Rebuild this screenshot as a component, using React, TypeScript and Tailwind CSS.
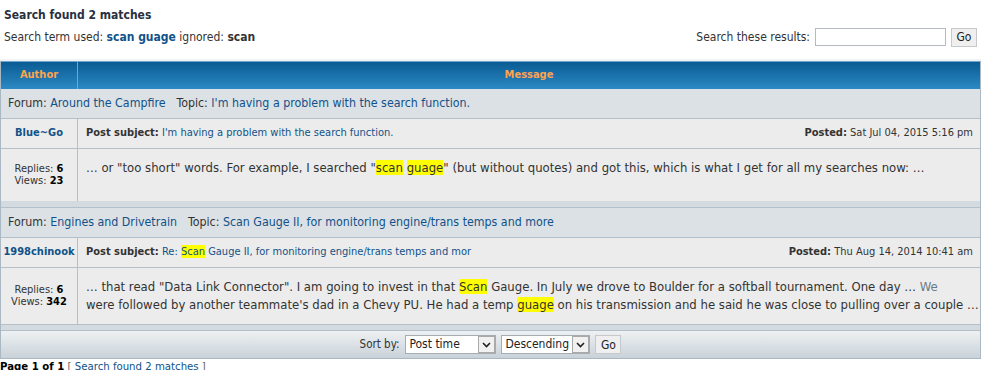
import React from "react";

const font = "font-['DejaVu_Sans_Condensed','DejaVu_Sans',sans-serif]";

function Hl({ children }: { children: React.ReactNode }) {
  return <span className="bg-[#ffff00]">{children}</span>;
}

function Chevron() {
  return (
    <svg width="9" height="6" viewBox="0 0 9 6" className="block">
      <path d="M1 1 L4.5 4.5 L8 1" fill="none" stroke="#222" strokeWidth="1.6" />
    </svg>
  );
}

function FakeSelect({ label, width }: { label: string; width: string }) {
  return (
    <div className={`flex h-[19px] items-stretch border border-[#a5acb2] bg-white ${width}`}>
      <div className="flex-1 pl-[3px] text-[12px] leading-[17px] text-[#222]">{label}</div>
      <div className="flex w-[17px] items-center justify-center border border-[#a9a9a9] bg-[#f1f1f1]">
        <Chevron />
      </div>
    </div>
  );
}

function Button({ label }: { label: string }) {
  return (
    <div className="flex h-[19px] w-[26px] items-center justify-center border border-[#c5c9cc] bg-[#efefef] text-[12px] text-[#222]">
      {label}
    </div>
  );
}

interface Result {
  forum: string;
  topic: string;
  author: string;
  subject: React.ReactNode;
  posted: string;
  replies: number;
  views: number;
  body: React.ReactNode;
  bodyH: string;
}

const results: Result[] = [
  {
    forum: "Around the Campfire",
    topic: "I'm having a problem with the search function.",
    author: "Blue~Go",
    subject: "I'm having a problem with the search function.",
    posted: "Sat Jul 04, 2015 5:16 pm",
    replies: 6,
    views: 23,
    body: (
      <>
        … or "too short" words. For example, I searched "<Hl>scan</Hl> <Hl>guage</Hl>" (but without quotes) and got this, which is what I get for all my searches now: …
      </>
    ),
    bodyH: "h-[52px]",
  },
  {
    forum: "Engines and Drivetrain",
    topic: "Scan Gauge II, for monitoring engine/trans temps and more",
    author: "1998chinook",
    subject: (
      <>
        Re: <Hl>Scan</Hl> Gauge II, for monitoring engine/trans temps and mor
      </>
    ),
    posted: "Thu Aug 14, 2014 10:41 am",
    replies: 6,
    views: 342,
    body: (
      <>
        … that read "Data Link Connector". I am going to invest in that <Hl>Scan</Hl> Gauge. In July we drove to Boulder for a softball tournament. One day … <span className="text-[#6a7a88]">We</span>
        <br />
        were followed by another teammate's dad in a Chevy PU. He had a temp <Hl>guage</Hl> on his transmission and he said he was close to pulling over a couple …
      </>
    ),
    bodyH: "h-[56px]",
  },
];

export default function App() {
  return (
    <div className={`h-[370px] w-[984px] overflow-hidden bg-white text-[#333] ${font}`}>
      <div className="px-[4px] pt-[7px]">
        <h2 className="text-[12px] font-bold leading-[16px] text-[#28313f]">Search found 2 matches</h2>
        <div className="mt-[4px] flex items-center justify-between pr-[3px]">
          <p className="text-[12px] leading-[20px]">
            Search term used: <span className="font-bold text-[#105289]">scan guage</span> ignored:{" "}
            <span className="font-bold">scan</span>
          </p>
          <div className="flex items-center gap-[5px] text-[12px]">
            <span>Search these results:</span>
            <div className="h-[18px] w-[131px] border border-[#b4bac0] bg-white" />
            <Button label="Go" />
          </div>
        </div>
      </div>

      <div className="mt-[12px] h-[2px] w-[981px] bg-[#eef3f6]" />
      <div className="grid w-[981px] grid-cols-[77px_1fr] border-x border-b border-[#a9b8c2]">
        <div className="flex h-[28px] items-center justify-center border-t border-r border-[#72a6cc] bg-gradient-to-b from-[#0a5b93] to-[#2b8ac4] text-[11px] font-bold text-[#ffa34f]">
          Author
        </div>
        <div className="flex h-[28px] items-center justify-center border-t border-[#72a6cc] bg-gradient-to-b from-[#0a5b93] to-[#2b8ac4] text-[11px] font-bold text-[#ffa34f]">
          Message
        </div>

        {results.map((r, i) => (
          <React.Fragment key={i}>
            {i > 0 && (
              <div className="col-span-2 h-[7px] border-b border-[#b4c0c9] bg-[#d3dbe1]" />
            )}
            <div className="col-span-2 flex h-[30px] items-center border-b border-[#b4c0c9] bg-[#dce1e5] px-[7px] text-[12.3px]">
              <span>
                Forum: <span className="text-[#105289]">{r.forum}</span>
              </span>
              <span className="ml-[11px]">
                Topic: <span className="text-[#105289]">{r.topic}</span>
              </span>
            </div>
            <div className="flex h-[30px] items-center justify-center border-r border-b border-[#b4c0c9] bg-[#ececec] text-[11px] font-bold text-[#105289]">
              {r.author}
            </div>
            <div className="flex h-[30px] items-center justify-between border-b border-[#b4c0c9] bg-[#ececec] pl-[8px] pr-[7px] text-[11px]">
              <span>
                <span className="font-bold">Post subject:</span>{" "}
                <span className="text-[#105289]">{r.subject}</span>
              </span>
              <span>
                <span className="font-bold">Posted:</span> {r.posted}
              </span>
            </div>
            <div className={`flex ${r.bodyH} flex-col items-center justify-center border-r border-[#b4c0c9] bg-[#ececec] text-[11px] leading-[12px] text-[#333]`}>
              <span>
                Replies: <b className="text-black">{r.replies}</b>
              </span>
              <span>
                Views: <b className="text-black">{r.views}</b>
              </span>
            </div>
            <div className={`${r.bodyH} bg-[#ececec] pl-[8px] pt-[10px] text-[13px] leading-[18px] text-[#333]`}>
              {r.body}
            </div>
          </React.Fragment>
        ))}

        <div className="col-span-2 h-[7px] border-y border-[#b4c0c9] bg-[#d3dbe1]" />
        <div className="col-span-2 flex h-[27px] items-center justify-center gap-[5px] bg-gradient-to-b from-[#eef1f3] to-[#c9d2d9] text-[11.5px]">
          <span className="mr-[1px]">Sort by:</span>
          <FakeSelect label="Post time" width="w-[91px]" />
          <FakeSelect label="Descending" width="w-[89px]" />
          <Button label="Go" />
        </div>
      </div>

      <div className="pt-[1px] text-[11.3px] leading-[14px]">
        <b className="text-black">Page 1 of 1</b>{" "}
        <span className="text-[#666]">
          [ <span className="text-[#105289]">Search found 2 matches</span> ]
        </span>
      </div>
    </div>
  );
}
